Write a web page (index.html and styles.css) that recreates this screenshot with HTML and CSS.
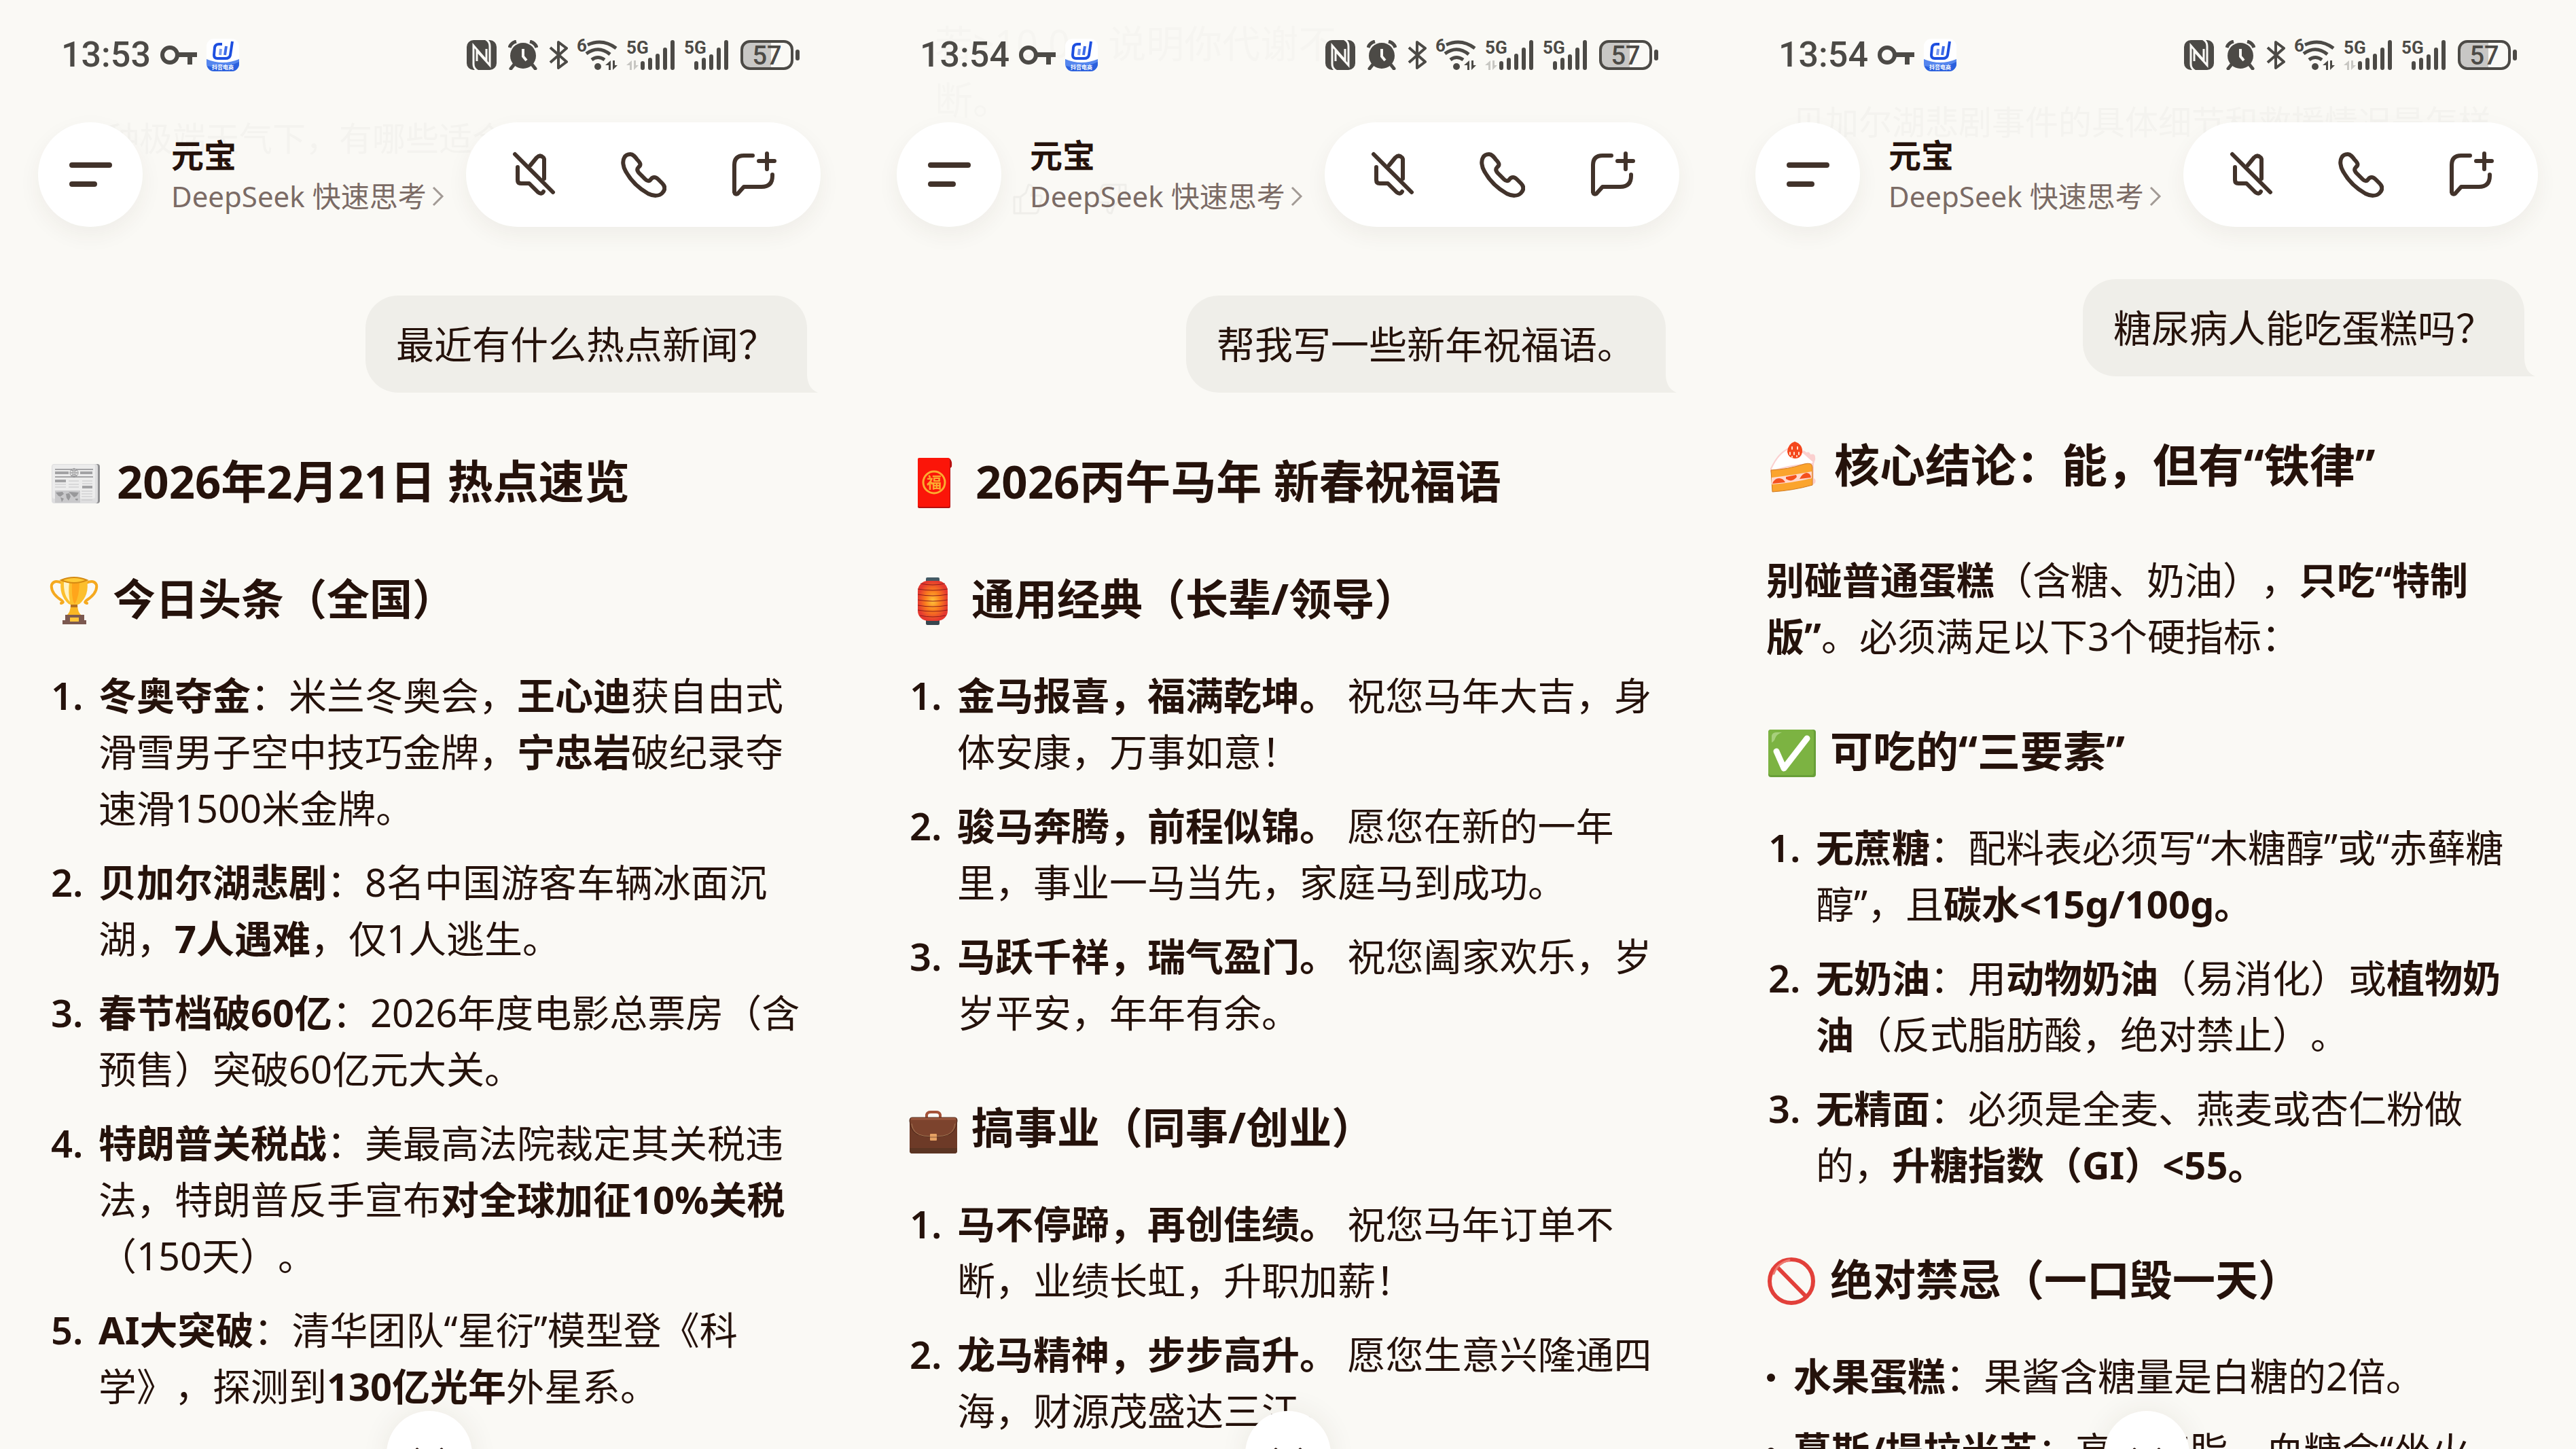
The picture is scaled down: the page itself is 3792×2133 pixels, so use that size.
FILE: index.html
```html
<!DOCTYPE html>
<html lang="zh-CN">
  <head>
    <meta charset="UTF-8" />
    <meta name="viewport" content="width=device-width, initial-scale=1.0" />
    <title>元宝</title>
    <link rel="stylesheet" href="styles.css">
  </head>
  <body>
    <!-- Shared icons -->
    <svg class="sprite" aria-hidden="true">
      <symbol id="key" viewBox="0 0 54 48">
        <circle cx="14" cy="24" r="11" fill="none" stroke="currentColor" stroke-width="6" />
        <path d="M25 20H54V27H47V38H40V27H25z" fill="currentColor" />
      </symbol>
      <symbol id="app" viewBox="0 0 48 48">
        <rect width="48" height="48" rx="11" fill="#fff" />
        <path d="M0 30Q24 40 48 30V37A11 11 0 0 1 37 48H11A11 11 0 0 1 0 37z" fill="#5586ee" />
        <path d="M1 40Q24 46 48 34V37A11 11 0 0 1 37 48H11Q3 47 1 40z" fill="#2b60dd" />
        <path d="M23 8H18Q13 8 12 13L11 24Q11 29 16 29H28Q34 29 35 24L38 4" fill="none" stroke="#1d4fe0" stroke-width="4" />
        <path d="M21 15L20 24" stroke="#7d9df0" stroke-width="4" />
        <path d="M29 11L27 24" stroke="#3d6be8" stroke-width="4" />
        <text x="24" y="45" text-anchor="middle" class="app-name">抖音电商</text>
      </symbol>
      <symbol id="nfc" viewBox="0 0 44 44">
        <rect width="44" height="44" rx="10" fill="currentColor" />
        <path d="M16 45Q10 42 10 35V8L29 30V13" fill="none" stroke="#faf9f5" stroke-width="3" />
        <path d="M28 -1Q34 2 34 9V37L15 16V31" fill="none" stroke="#faf9f5" stroke-width="3" />
      </symbol>
      <symbol id="alarm" viewBox="0 0 44 44">
        <circle cx="22" cy="23" r="19" fill="currentColor" />
        <path d="M2 11Q4 4 12 2M42 11Q40 4 32 2" fill="none" stroke="currentColor" stroke-width="5" />
        <path d="M8 37L4 42M36 37L40 42" stroke="currentColor" stroke-width="5" stroke-linecap="round" />
        <path d="M22 13V24L27 30" fill="none" stroke="#faf9f5" stroke-width="4" />
      </symbol>
      <symbol id="bluetooth" viewBox="0 0 28 44">
        <path d="M2 11L26 32L14 41V3L26 12L2 33" fill="none" stroke="currentColor" stroke-width="4" stroke-linejoin="round" />
      </symbol>
      <symbol id="wifi" viewBox="0 0 60 48">
        <text x="0" y="19" class="net">6</text>
        <path d="M16 9Q38 -1 58 14M14 22Q32 9 49 23M22 31Q31 24 41 31" fill="none" stroke="currentColor" stroke-width="5" />
        <circle cx="31" cy="41" r="5" fill="currentColor" />
        <path d="M50 32V46H47V39H42zM53 46V32H56V39H60z" fill="currentColor" />
      </symbol>
      <symbol id="signal-data" viewBox="0 0 71 44">
        <text x="0" y="20" class="net">5G</text>
        <path d="M8 30V44H5V37H0zM11 44V30H14V37H18z" fill="#c8c7c3" />
        <path d="M24 34V41M35 29V41M46 23V41M57 14V41M68 3V41" stroke="currentColor" stroke-width="6" stroke-linecap="round" />
      </symbol>
      <symbol id="signal" viewBox="0 0 65 44">
        <text x="0" y="20" class="net">5G</text>
        <path d="M18 34V41M29 29V41M40 24V41M51 14V41M62 3V41" stroke="currentColor" stroke-width="6" stroke-linecap="round" />
      </symbol>
      <symbol id="battery" viewBox="0 0 87 44">
        <path d="M45 2V42H14A12 12 0 0 1 2 30V14A12 12 0 0 1 14 2z" fill="#c8c7c5" />
        <rect x="2" y="2" width="74" height="40" rx="12" fill="none" stroke="currentColor" stroke-width="4" />
        <rect x="81" y="14" width="6" height="16" rx="3" fill="currentColor" />
        <text x="39" y="36" text-anchor="middle" class="level">57</text>
      </symbol>
      <symbol id="menu" viewBox="0 0 68 68">
        <path d="M7 20H62M7 48H40" stroke="currentColor" stroke-width="8" stroke-linecap="round" />
      </symbol>
      <symbol id="mute" viewBox="0 0 68 68">
        <path d="M7 4L63 60M30 20L39 9Q44 4 49 9L50 11V40M11 23V42Q11 47 16 47H28L41 60Q46 64 49 59" fill="none" stroke="currentColor" stroke-width="6" stroke-linecap="round" stroke-linejoin="round" />
      </symbol>
      <symbol id="phone" viewBox="0 0 68 68">
        <path d="M15 4C19 4 22 8 25 12C30 17 31 20 27 23C24 26 25 29 28 32L37 41C40 44 43 44 45 41C48 37 52 37 56 41L62 47C67 52 66 57 62 61C57 66 49 66 41 62C27 54 15 42 8 29C4 22 3 14 6 9C8 5 11 4 15 4z" fill="none" stroke="currentColor" stroke-width="6" stroke-linejoin="round" />
      </symbol>
      <symbol id="new-chat" viewBox="0 0 68 68">
        <path d="M33 6H20Q6 6 6 20V60Q7 64 11 62L20 52H46Q62 52 62 36V34M54 3V26M42 14H65" fill="none" stroke="currentColor" stroke-width="6" stroke-linecap="round" stroke-linejoin="round" />
      </symbol>
      <symbol id="chevron" viewBox="0 0 18 30">
        <path d="M2 2L15 15L2 28" fill="none" stroke="currentColor" stroke-width="3" />
      </symbol>
      <symbol id="down" viewBox="0 0 60 60">
        <path d="M12 24L30 42L48 24" fill="none" stroke="currentColor" stroke-width="5" stroke-linecap="round" stroke-linejoin="round" />
      </symbol>
      <symbol id="tail" viewBox="0 0 16 26">
        <path d="M0 0Q1 20 16 26H0z" fill="currentColor" />
      </symbol>
      <symbol id="thumb" viewBox="0 0 46 48">
        <path d="M3 21H12V45H3zM12 21L20 15L24 3Q31 3 30 11L28 19H42Q44 20 43 24L38 42Q37 45 34 45H12" fill="none" stroke="currentColor" stroke-width="3" stroke-linejoin="round" />
      </symbol>
    </svg>

    <div class="phones">
      <section class="phone">
        <div class="faded faded-news" aria-hidden="true">种极端天气下，有哪些适合</div>
        <header class="top">
          <div class="status">
            <span class="time">13:53</span>
            <svg class="i-key"><use href="#key" /></svg>
            <svg class="i-app"><use href="#app" /></svg>
            <svg class="i-nfc"><use href="#nfc" /></svg>
            <svg class="i-alarm"><use href="#alarm" /></svg>
            <svg class="i-bluetooth"><use href="#bluetooth" /></svg>
            <svg class="i-wifi"><use href="#wifi" /></svg>
            <svg class="i-data"><use href="#signal-data" /></svg>
            <svg class="i-signal"><use href="#signal" /></svg>
            <svg class="i-battery"><use href="#battery" /></svg>
          </div>
          <div class="bar">
            <button class="menu" aria-label="菜单"><svg class="icon"><use href="#menu" /></svg></button>
            <div class="title">
              <div class="name">元宝</div>
              <button class="model">DeepSeek 快速思考<svg class="chevron"><use href="#chevron" /></svg></button>
            </div>
            <div class="actions">
              <button aria-label="静音"><svg class="icon"><use href="#mute" /></svg></button>
              <button aria-label="通话"><svg class="icon"><use href="#phone" /></svg></button>
              <button aria-label="新对话"><svg class="icon"><use href="#new-chat" /></svg></button>
            </div>
          </div>
        </header>
        <main class="chat">
          <div class="bubble">最近有什么热点新闻？<svg class="tail"><use href="#tail" /></svg></div>
          <h1>
            <svg class="emoji" viewBox="0 0 84 84" aria-hidden="true">
              <rect x="8" y="17" width="67" height="58" rx="4" fill="#8e8e90" />
              <rect x="4" y="17" width="68" height="58" rx="4" fill="#dededf" />
              <rect x="5" y="18" width="63" height="50" rx="3" fill="#ececec" />
              <path d="M9 25H65M9 36H65" stroke="#a4a4a6" stroke-width="2" />
              <path d="M9 30H29M46 30H64M9 42H25M49 51H64" stroke="#a2a2a4" stroke-width="4" />
              <path d="M29 42H44M49 42H64M9 47H25M29 47H44M9 51H25M29 51H44M48 57H64M48 61H64M48 65H64M48 70H64M49 46H64" stroke="#c4c4c6" stroke-width="1" />
              <circle cx="37" cy="30" r="6" fill="#fff" stroke="#88888a" stroke-width="1" />
              <path d="M31 30H43M37 24V36M33 26Q37 29 41 26M33 34Q37 31 41 34" fill="none" stroke="#88888a" stroke-width="1" />
              <ellipse cx="37" cy="30" rx="3" ry="6" fill="none" stroke="#88888a" stroke-width="1" />
              <path d="M9 56H46V74H9z" fill="#c9c9cb" />
              <path d="M10 59L20 58L22 61L17 65L14 64zM17 66L22 68L19 73zM25 61L30 60L32 65L29 71L26 67zM29 58L44 59L41 64L37 66L33 62zM39 68L43 68L42 71L39 70z" fill="#98989a" />
            </svg>
            2026年2月21日 热点速览
          </h1>
          <h2>
            <svg class="emoji" viewBox="0 0 78 78" aria-hidden="true">
              <path d="M19 16Q7 11 4 19Q2 31 19 42Q23 45 18 46M55 16Q67 11 70 19Q72 31 55 42Q51 45 56 46" fill="none" stroke="#f5a91f" stroke-width="4" stroke-linecap="round" />
              <path d="M32 48H42Q42 59 48 64H26Q32 59 32 48z" fill="#f9b624" />
              <path d="M18 12Q37 4 56 12Q60 34 45 47Q37 51 29 47Q14 34 18 12z" fill="#fcbf2d" />
              <path d="M22 14Q21 34 31 44Q28 30 30 15z" fill="#fff3c4" />
              <path d="M34 14H45Q45 36 38 47Q33 42 34 14z" fill="#ffa51b" />
              <path d="M18 12Q37 20 56 12Q37 4 18 12z" fill="#ffca37" stroke="#d58a12" stroke-width="2" />
              <rect x="32" y="48" width="10" height="4" fill="#b26e22" />
              <path d="M24 63H52V71H55V77H20V71H24z" fill="#7c5950" />
              <rect x="31" y="67" width="13" height="6" fill="#fdc43c" />
            </svg>
            今日头条（全国）
          </h2>
          <ol>
            <li><p><strong>冬奥夺金</strong>：米兰冬奥会，<strong>王心迪</strong>获自由式滑雪男子空中技巧金牌，<strong>宁忠岩</strong>破纪录夺速滑1500米金牌。</p></li>
            <li><p><strong>贝加尔湖悲剧</strong>：8名中国游客车辆冰面沉湖，<strong>7人遇难</strong>，仅1人逃生。</p></li>
            <li><p><strong>春节档破60亿</strong>：2026年度电影总票房（含预售）突破60亿元大关。</p></li>
            <li><p><strong>特朗普关税战</strong>：美最高法院裁定其关税违法，特朗普反手宣布<strong>对全球加征10%关税</strong>（150天）。</p></li>
            <li><p><strong>AI大突破</strong>：清华团队“星衍”模型登《科学》，探测到<strong>130亿光年</strong>外星系。</p></li>
          </ol>
        </main>
        <button class="to-bottom" aria-label="回到底部"><svg><use href="#down" /></svg></button>
      </section>

      <section class="phone">
        <div class="faded faded-wishes" aria-hidden="true">若&gt;10.0，说明你代谢不<br>断。</div>
        <div class="faded faded-tools" aria-hidden="true">
          <svg><use href="#thumb" /></svg>
          <svg class="flip"><use href="#thumb" /></svg>
        </div>
        <header class="top">
          <div class="status">
            <span class="time">13:54</span>
            <svg class="i-key"><use href="#key" /></svg>
            <svg class="i-app"><use href="#app" /></svg>
            <svg class="i-nfc"><use href="#nfc" /></svg>
            <svg class="i-alarm"><use href="#alarm" /></svg>
            <svg class="i-bluetooth"><use href="#bluetooth" /></svg>
            <svg class="i-wifi"><use href="#wifi" /></svg>
            <svg class="i-data"><use href="#signal-data" /></svg>
            <svg class="i-signal"><use href="#signal" /></svg>
            <svg class="i-battery"><use href="#battery" /></svg>
          </div>
          <div class="bar">
            <button class="menu" aria-label="菜单"><svg class="icon"><use href="#menu" /></svg></button>
            <div class="title">
              <div class="name">元宝</div>
              <button class="model">DeepSeek 快速思考<svg class="chevron"><use href="#chevron" /></svg></button>
            </div>
            <div class="actions">
              <button aria-label="静音"><svg class="icon"><use href="#mute" /></svg></button>
              <button aria-label="通话"><svg class="icon"><use href="#phone" /></svg></button>
              <button aria-label="新对话"><svg class="icon"><use href="#new-chat" /></svg></button>
            </div>
          </div>
        </header>
        <main class="chat">
          <div class="bubble">帮我写一些新年祝福语。<svg class="tail"><use href="#tail" /></svg></div>
          <h1>
            <svg class="emoji" viewBox="0 0 84 84" aria-hidden="true">
              <path d="M58 9H62Q66 12 65 21L62 24H58z" fill="#b80d0d" />
              <rect x="15" y="9" width="48" height="73" rx="2" fill="#b5100f" />
              <rect x="15" y="8" width="47" height="72" rx="2" fill="#fb1509" />
              <circle cx="39" cy="44" r="16" fill="none" stroke="#fcab2f" stroke-width="3" />
              <text x="39" y="52" text-anchor="middle" class="luck">福</text>
            </svg>
            2026丙午马年 新春祝福语
          </h1>
          <h2>
            <svg class="emoji" viewBox="0 0 78 78" aria-hidden="true">
              <defs>
                <radialGradient id="lantern-glow">
                  <stop offset="0" stop-color="#ffc43a" />
                  <stop offset="0.5" stop-color="#fa7d1e" />
                  <stop offset="1" stop-color="#e5392f" />
                </radialGradient>
              </defs>
              <rect x="27" y="8" width="20" height="9" rx="2" fill="#455a64" />
              <rect x="27" y="69" width="20" height="9" rx="2" fill="#37474f" />
              <rect x="15" y="13" width="44" height="59" rx="15" fill="url(#lantern-glow)" />
              <path d="M19 17Q37 21 55 17M15 25Q37 29 59 25M15 33Q37 37 59 33M15 41Q37 45 59 41M15 49Q37 53 59 49M15 56Q37 60 59 56M18 64Q37 68 56 64" fill="none" stroke="#8f1d1b" stroke-width="1" />
            </svg>
            通用经典（长辈/领导）
          </h2>
          <ol>
            <li><p><strong>金马报喜，福满乾坤。</strong> 祝您马年大吉，身体安康，万事如意！</p></li>
            <li><p><strong>骏马奔腾，前程似锦。</strong> 愿您在新的一年里，事业一马当先，家庭马到成功。</p></li>
            <li><p><strong>马跃千祥，瑞气盈门。</strong> 祝您阖家欢乐，岁岁平安，年年有余。</p></li>
          </ol>
          <h2>
            <svg class="emoji" viewBox="0 0 78 78" aria-hidden="true">
              <path d="M28 25V21Q29 17 34 17H42Q47 17 48 21V25" fill="none" stroke="#a55238" stroke-width="4" />
              <rect x="3" y="25" width="70" height="53" rx="4" fill="#6d3a27" />
              <path d="M3 70H73V74Q73 78 69 78H7Q3 78 3 74z" fill="#5b3523" />
              <path d="M7 25H69Q73 25 73 30Q72 50 54 52L38 54L22 52Q4 50 3 30Q3 25 7 25z" fill="#7c432d" stroke="#4c281b" stroke-width="1" />
              <path d="M5 27H71" stroke="#99563d" stroke-width="3" />
              <path d="M6 34Q8 50 24 52L38 53L52 52Q68 50 70 34" fill="none" stroke="#a37552" stroke-width="1" />
              <rect x="33" y="49" width="10" height="10" rx="1" fill="#e5a163" />
              <path d="M33 54H43" stroke="#8b5738" stroke-width="1" />
            </svg>
            搞事业（同事/创业）
          </h2>
          <ol>
            <li><p><strong>马不停蹄，再创佳绩。</strong> 祝您马年订单不断，业绩长虹，升职加薪！</p></li>
            <li><p><strong>龙马精神，步步高升。</strong> 愿您生意兴隆通四海，财源茂盛达三江。</p></li>
          </ol>
        </main>
        <button class="to-bottom" aria-label="回到底部"><svg><use href="#down" /></svg></button>
      </section>

      <section class="phone">
        <div class="faded faded-cake" aria-hidden="true">贝加尔湖悲剧事件的具体细节和救援情况是怎样</div>
        <header class="top">
          <div class="status">
            <span class="time">13:54</span>
            <svg class="i-key"><use href="#key" /></svg>
            <svg class="i-app"><use href="#app" /></svg>
            <svg class="i-nfc"><use href="#nfc" /></svg>
            <svg class="i-alarm"><use href="#alarm" /></svg>
            <svg class="i-bluetooth"><use href="#bluetooth" /></svg>
            <svg class="i-wifi"><use href="#wifi" /></svg>
            <svg class="i-data"><use href="#signal-data" /></svg>
            <svg class="i-signal"><use href="#signal" /></svg>
            <svg class="i-battery"><use href="#battery" /></svg>
          </div>
          <div class="bar">
            <button class="menu" aria-label="菜单"><svg class="icon"><use href="#menu" /></svg></button>
            <div class="title">
              <div class="name">元宝</div>
              <button class="model">DeepSeek 快速思考<svg class="chevron"><use href="#chevron" /></svg></button>
            </div>
            <div class="actions">
              <button aria-label="静音"><svg class="icon"><use href="#mute" /></svg></button>
              <button aria-label="通话"><svg class="icon"><use href="#phone" /></svg></button>
              <button aria-label="新对话"><svg class="icon"><use href="#new-chat" /></svg></button>
            </div>
          </div>
        </header>
        <main class="chat chat-scrolled">
          <div class="bubble">糖尿病人能吃蛋糕吗？<svg class="tail"><use href="#tail" /></svg></div>
          <h1>
            <svg class="emoji" viewBox="0 0 84 84" aria-hidden="true">
              <path d="M52 22Q56 20 59 24Q64 22 65 27Q72 25 72 31Q73 36 70 38V62Q74 64 72 69L66 73L60 40z" fill="#fbd0cf" />
              <path d="M7 48Q18 24 34 18L52 22L70 38Q68 42 62 41Q34 43 7 52z" fill="#fff" stroke="#fbd0cf" stroke-width="2" />
              <path d="M7 50Q32 49 56 41Q68 38 68 46V72Q40 80 9 82z" fill="#fba42d" stroke="#d07a22" stroke-width="1" />
              <path d="M8 61Q36 58 67 52V62Q38 69 8 71z" fill="#ffd9cf" />
              <path d="M9 70Q12 62 19 62Q25 62 28 68zM29 63Q38 69 45 60L44 57L29 60zM49 63Q53 55 59 54Q65 54 66 61z" fill="#f4511e" />
              <path d="M42 8Q54 12 53 24Q51 33 42 33Q32 32 31 23Q32 11 42 8z" fill="#f4471d" />
              <path d="M38 16V19M46 16V19M35 24V27M41 24V27M48 24V27M38 30V31M45 29V30" stroke="#ffe2cc" stroke-width="2" stroke-linecap="round" />
            </svg>
            核心结论：能，但有“铁律”
          </h1>
          <p class="lead"><strong>别碰普通蛋糕</strong>（含糖、奶油），<strong>只吃“特制版”</strong>。必须满足以下3个硬指标：</p>
          <h2>
            <svg class="emoji" viewBox="0 0 78 78" aria-hidden="true">
              <rect x="3" y="8" width="70" height="70" rx="4" fill="#689f38" />
              <rect x="3" y="8" width="67" height="67" rx="4" fill="#7cb342" />
              <path d="M8 27V17Q9 12 16 12H23Q15 15 13 21Q12 25 8 27z" fill="#a7d07c" />
              <path d="M15 40L26 65L60 21" fill="none" stroke="#fff" stroke-width="9" stroke-linecap="round" stroke-linejoin="round" />
            </svg>
            可吃的“三要素”
          </h2>
          <ol>
            <li><p><strong>无蔗糖</strong>：配料表必须写“木糖醇”或“赤藓糖醇”，且<strong>碳水&lt;15g/100g。</strong></p></li>
            <li><p><strong>无奶油</strong>：用<strong>动物奶油</strong>（易消化）或<strong>植物奶油</strong>（反式脂肪酸，绝对禁止）。</p></li>
            <li><p><strong>无精面</strong>：必须是全麦、燕麦或杏仁粉做的，<strong>升糖指数（GI）&lt;55。</strong></p></li>
          </ol>
          <h2>
            <svg class="emoji" viewBox="0 0 78 78" aria-hidden="true">
              <circle cx="37" cy="42" r="32" fill="none" stroke="#e2403a" stroke-width="6" />
              <path d="M15 20L59 65" stroke="#e2403a" stroke-width="6" />
              <path d="M11 31Q17 15 34 11" fill="none" stroke="#ef7a70" stroke-width="3" stroke-linecap="round" />
            </svg>
            绝对禁忌（一口毁一天）
          </h2>
          <ul>
            <li><p><strong>水果蛋糕</strong>：果酱含糖量是白糖的2倍。</p></li>
            <li><p><strong>慕斯/提拉米苏</strong>：高糖高脂，血糖会“坐火箭”。</p></li>
          </ul>
        </main>
        <button class="to-bottom" aria-label="回到底部"><svg><use href="#down" /></svg></button>
      </section>
    </div>
  </body>
</html>
```
FILE: styles.css
```css
* {
  box-sizing: border-box;
}

body {
  margin: 0;
  background: #faf9f5;
  color: #25120b;
  font-family: "Noto Sans", "Noto Sans CJK SC", sans-serif;
  font-size: 56px;
  line-height: 83px;
  text-spacing-trim: space-all;
  overflow: hidden;
}

button {
  margin: 0;
  padding: 0;
  border: 0;
  background: none;
  color: inherit;
  font: inherit;
  cursor: pointer;
}

svg {
  display: block;
  flex: none;
}

.sprite {
  display: none;
}

.phones {
  display: grid;
  grid-template-columns: repeat(3, 1fr);
  height: 100vh;
}

.phone {
  position: relative;
  overflow: hidden;
}

/* Status bar */
.top {
  position: relative;
  padding: 57px 56px 0;
}

.status {
  display: flex;
  align-items: center;
  height: 48px;
  padding: 0 31px 0 34px;
  color: #4c4a46;
}

.time {
  font-family: Roboto, sans-serif;
  font-size: 52px;
  font-weight: 500;
  line-height: 48px;
}

.i-key {
  width: 54px;
  height: 48px;
  margin-left: 14px;
}

.i-app {
  width: 48px;
  height: 48px;
  margin-left: 14px;
}

.i-nfc {
  width: 44px;
  height: 44px;
  margin-left: auto;
}

.i-alarm {
  width: 44px;
  height: 44px;
  margin-left: 17px;
}

.i-bluetooth {
  width: 28px;
  height: 44px;
  margin-left: 16px;
}

.i-wifi {
  width: 60px;
  height: 48px;
  margin-left: 13px;
}

.i-data {
  width: 71px;
  height: 44px;
  margin-left: 13px;
}

.i-signal {
  width: 65px;
  height: 44px;
  margin-left: 14px;
}

.i-battery {
  width: 87px;
  height: 44px;
  margin-left: 18px;
}

.net {
  font: 700 26px Roboto, sans-serif;
  fill: currentColor;
}

.level {
  font: 500 38px Roboto, sans-serif;
  fill: currentColor;
}

.app-name {
  font: 700 8px "Noto Sans CJK SC", sans-serif;
  fill: #fff;
}

.luck {
  font: 700 22px "Noto Sans CJK SC", sans-serif;
  fill: #fcab2f;
}

/* Title bar */
.bar {
  display: flex;
  align-items: center;
  margin-top: 75px;
}

.icon {
  width: 68px;
  height: 68px;
}

.menu,
.actions {
  display: flex;
  align-items: center;
  justify-content: center;
  height: 154px;
  border-radius: 77px;
  background: #fff;
  color: #42332b;
  box-shadow: 0 12px 32px rgba(60, 50, 30, 0.06);
}

.menu {
  width: 154px;
}

.title {
  flex: 1;
  margin-left: 42px;
  padding-top: 4px;
}

.name {
  font-size: 48px;
  font-weight: 700;
  line-height: 60px;
}

.model {
  display: flex;
  align-items: center;
  gap: 8px;
  color: #7b6b65;
  font-size: 42px;
  line-height: 60px;
  white-space: nowrap;
}

.chevron {
  width: 18px;
  height: 30px;
  color: #a29a95;
}

.actions {
  padding: 0 18px;
}

.actions button {
  display: flex;
  justify-content: center;
  width: 162px;
}

/* Older messages, fading out under the title bar */
.faded {
  position: absolute;
  color: #f4f3ef;
  white-space: nowrap;
}

.faded-news {
  top: 162px;
  left: 156px;
  font-size: 49px;
}

.faded-wishes {
  top: 22px;
  left: 112px;
  color: #f6f5f1;
}

.faded-tools {
  display: flex;
  gap: 78px;
  top: 269px;
  left: 226px;
  color: #efeeea;
}

.faded-tools svg {
  width: 46px;
  height: 48px;
}

.faded-tools .flip {
  transform: rotate(180deg);
}

.faded-cake {
  top: 138px;
  left: 110px;
  font-size: 49px;
}

/* Conversation */
.chat {
  display: flex;
  flex-direction: column;
  padding: 101px 72px 0;
}

.chat-scrolled {
  padding-top: 77px;
}

.bubble {
  position: relative;
  align-self: flex-end;
  margin-right: 4px;
  padding: 30px 45px;
  border-radius: 48px 48px 0 48px;
  background: #efeee9;
}

.tail {
  position: absolute;
  right: -16px;
  bottom: 0;
  width: 16px;
  height: 26px;
  color: #efeee9;
}

h1,
h2 {
  display: flex;
  align-items: center;
  gap: 16px;
  margin: 82px 0 0;
  font-weight: 700;
  white-space: nowrap;
}

h1 {
  font-size: 67px;
  line-height: 96px;
}

h2 {
  font-size: 63px;
  line-height: 90px;
}

h1 + h2 {
  margin-top: 80px;
}

h1 .emoji {
  width: 84px;
  height: 84px;
}

h2 .emoji {
  width: 78px;
  height: 78px;
}

p {
  margin: 0;
}

.lead {
  margin-top: 80px;
}

ol,
ul {
  display: flex;
  flex-direction: column;
  gap: 26px;
  margin: 56px 0 0;
  padding: 0;
  list-style: none;
}

ol {
  counter-reset: item;
}

li {
  display: grid;
  grid-template-columns: 70px 1fr;
}

ol li {
  padding-left: 3px;
  counter-increment: item;
}

ol li::before {
  content: counter(item) ".";
  font-weight: 600;
}

ul li {
  grid-template-columns: 40px 1fr;
}

ul li::before {
  content: "";
  width: 12px;
  height: 12px;
  margin: 38px 0 0 1px;
  border-radius: 6px;
  background: #25120b;
}

strong {
  font-weight: 700;
}

/* Scroll to bottom */
.to-bottom {
  display: flex;
  align-items: center;
  justify-content: center;
  position: absolute;
  bottom: -70px;
  left: 50%;
  width: 126px;
  height: 126px;
  margin-left: -63px;
  border-radius: 63px;
  background: #fff;
  box-shadow: 0 0 40px rgba(60, 50, 30, 0.08);
}

.to-bottom svg {
  width: 60px;
  height: 60px;
}
```
